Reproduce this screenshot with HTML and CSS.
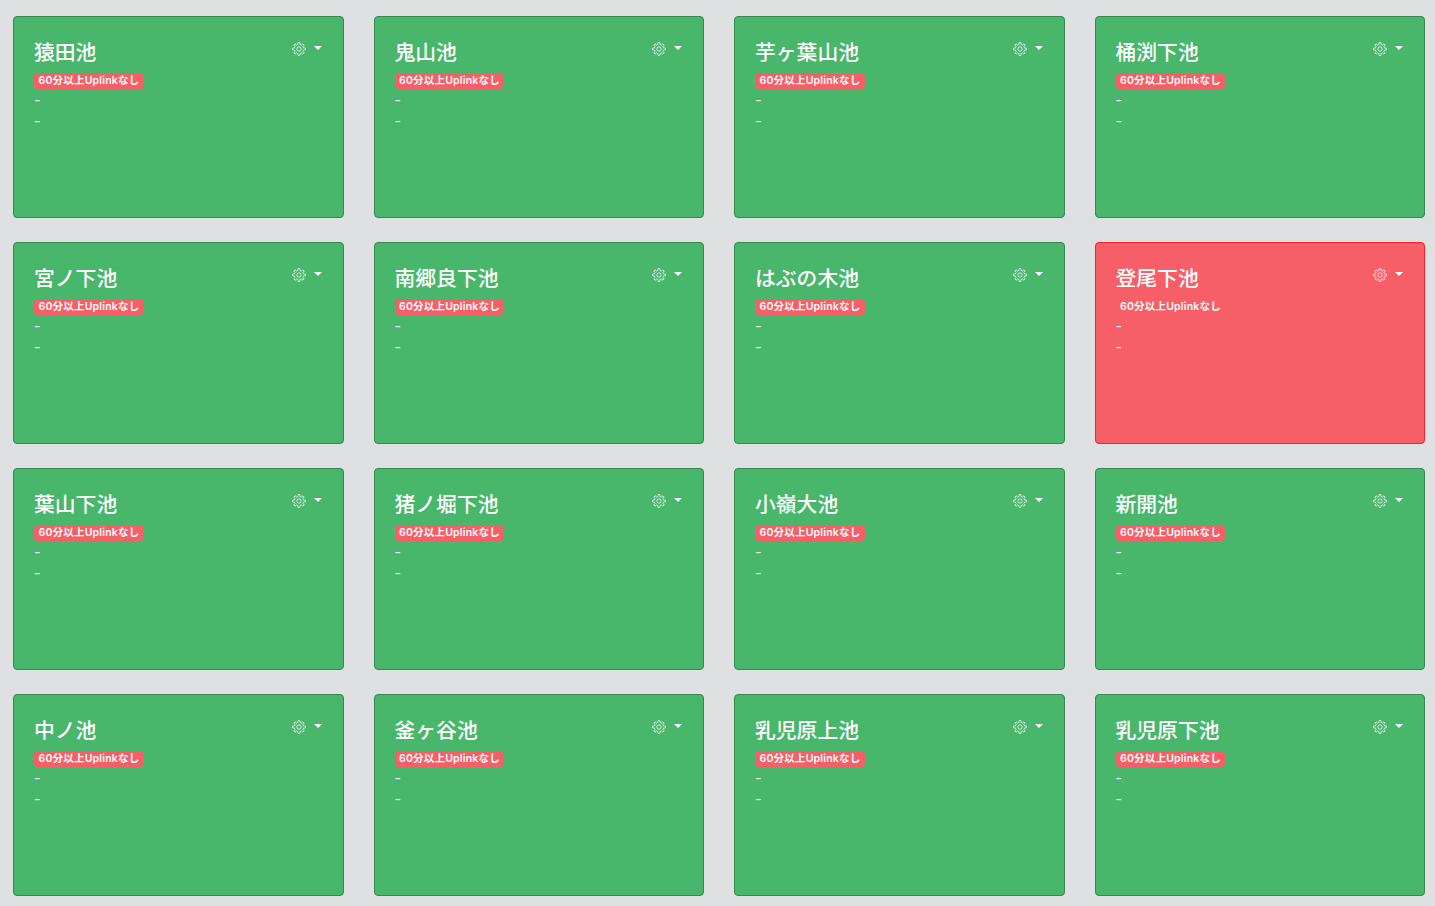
FILE: index.html
```html
<!DOCTYPE html>
<html lang="ja">

<head>
    <meta charset="UTF-8">
    <title>ため池一覧</title>
    <link rel="stylesheet" href="styles.css">
</head>

<body>

    <svg class="defs" width="0" height="0">
        <symbol id="gear" viewBox="0 0 16 16">
            <g fill="none" stroke="currentColor" stroke-width="0.85" stroke-linejoin="round">
                <path id="tooth" d="M5.97 3.1 6.81 2.84 6.97.67H9.03L9.19 2.84 10.03 3.1"/>
                <use href="#tooth" transform="rotate(45 8 8)"/>
                <use href="#tooth" transform="rotate(90 8 8)"/>
                <use href="#tooth" transform="rotate(135 8 8)"/>
                <use href="#tooth" transform="rotate(180 8 8)"/>
                <use href="#tooth" transform="rotate(225 8 8)"/>
                <use href="#tooth" transform="rotate(270 8 8)"/>
                <use href="#tooth" transform="rotate(315 8 8)"/>
                <circle cx="8" cy="8" r="2.5"/>
            </g>
        </symbol>
    </svg>

    <div class="grid">
        <div class="card">
            <div class="card-head"><h5>猿田池</h5><div class="menu"><svg class="gear"><use href="#gear"/></svg><span class="caret"></span></div></div>
            <span class="badge">60分以上Uplinkなし</span>
            <p>-</p>
            <p>-</p>
        </div>
        <div class="card">
            <div class="card-head"><h5>鬼山池</h5><div class="menu"><svg class="gear"><use href="#gear"/></svg><span class="caret"></span></div></div>
            <span class="badge">60分以上Uplinkなし</span>
            <p>-</p>
            <p>-</p>
        </div>
        <div class="card">
            <div class="card-head"><h5>芋ヶ葉山池</h5><div class="menu"><svg class="gear"><use href="#gear"/></svg><span class="caret"></span></div></div>
            <span class="badge">60分以上Uplinkなし</span>
            <p>-</p>
            <p>-</p>
        </div>
        <div class="card">
            <div class="card-head"><h5>桶渕下池</h5><div class="menu"><svg class="gear"><use href="#gear"/></svg><span class="caret"></span></div></div>
            <span class="badge">60分以上Uplinkなし</span>
            <p>-</p>
            <p>-</p>
        </div>

        <div class="card">
            <div class="card-head"><h5>宮ノ下池</h5><div class="menu"><svg class="gear"><use href="#gear"/></svg><span class="caret"></span></div></div>
            <span class="badge">60分以上Uplinkなし</span>
            <p>-</p>
            <p>-</p>
        </div>
        <div class="card">
            <div class="card-head"><h5>南郷良下池</h5><div class="menu"><svg class="gear"><use href="#gear"/></svg><span class="caret"></span></div></div>
            <span class="badge">60分以上Uplinkなし</span>
            <p>-</p>
            <p>-</p>
        </div>
        <div class="card">
            <div class="card-head"><h5>はぶの木池</h5><div class="menu"><svg class="gear"><use href="#gear"/></svg><span class="caret"></span></div></div>
            <span class="badge">60分以上Uplinkなし</span>
            <p>-</p>
            <p>-</p>
        </div>
        <div class="card card-alert">
            <div class="card-head"><h5>登尾下池</h5><div class="menu"><svg class="gear"><use href="#gear"/></svg><span class="caret"></span></div></div>
            <span class="badge">60分以上Uplinkなし</span>
            <p>-</p>
            <p>-</p>
        </div>

        <div class="card">
            <div class="card-head"><h5>葉山下池</h5><div class="menu"><svg class="gear"><use href="#gear"/></svg><span class="caret"></span></div></div>
            <span class="badge">60分以上Uplinkなし</span>
            <p>-</p>
            <p>-</p>
        </div>
        <div class="card">
            <div class="card-head"><h5>猪ノ堀下池</h5><div class="menu"><svg class="gear"><use href="#gear"/></svg><span class="caret"></span></div></div>
            <span class="badge">60分以上Uplinkなし</span>
            <p>-</p>
            <p>-</p>
        </div>
        <div class="card">
            <div class="card-head"><h5>小嶺大池</h5><div class="menu"><svg class="gear"><use href="#gear"/></svg><span class="caret"></span></div></div>
            <span class="badge">60分以上Uplinkなし</span>
            <p>-</p>
            <p>-</p>
        </div>
        <div class="card">
            <div class="card-head"><h5>新開池</h5><div class="menu"><svg class="gear"><use href="#gear"/></svg><span class="caret"></span></div></div>
            <span class="badge">60分以上Uplinkなし</span>
            <p>-</p>
            <p>-</p>
        </div>

        <div class="card">
            <div class="card-head"><h5>中ノ池</h5><div class="menu"><svg class="gear"><use href="#gear"/></svg><span class="caret"></span></div></div>
            <span class="badge">60分以上Uplinkなし</span>
            <p>-</p>
            <p>-</p>
        </div>
        <div class="card">
            <div class="card-head"><h5>釜ヶ谷池</h5><div class="menu"><svg class="gear"><use href="#gear"/></svg><span class="caret"></span></div></div>
            <span class="badge">60分以上Uplinkなし</span>
            <p>-</p>
            <p>-</p>
        </div>
        <div class="card">
            <div class="card-head"><h5>乳児原上池</h5><div class="menu"><svg class="gear"><use href="#gear"/></svg><span class="caret"></span></div></div>
            <span class="badge">60分以上Uplinkなし</span>
            <p>-</p>
            <p>-</p>
        </div>
        <div class="card">
            <div class="card-head"><h5>乳児原下池</h5><div class="menu"><svg class="gear"><use href="#gear"/></svg><span class="caret"></span></div></div>
            <span class="badge">60分以上Uplinkなし</span>
            <p>-</p>
            <p>-</p>
        </div>
    </div>

</body>

</html>
```

FILE: styles.css
```css
html,
body {
    height: 906px;
    overflow: hidden;
}

body {
    margin: 0;
    background: #dfe0e2;
    color: #fff;
    font-family: Inter, "Noto Sans CJK JP", sans-serif;
}

.defs {
    display: block;
}

.grid {
    display: grid;
    grid-template-columns: repeat(4, 1fr);
    gap: 24px 30px;
    padding: 16px 10px 0 13px;
}

.card {
    height: 202px;
    box-sizing: border-box;
    padding: 21px 20px 20px;
    background: #48b66b;
    border: 1px solid #38894f;
    border-radius: 4px;
}

.card-alert {
    background: #f65f67;
    border-color: #f5222d;
}

.card-head {
    display: flex;
    justify-content: space-between;
    align-items: flex-start;
}

h5 {
    margin: 0;
    font-size: 20.8px;
    font-weight: 500;
    line-height: 30px;
}

.menu {
    display: flex;
    align-items: flex-start;
    gap: 8px;
    padding: 4px 1px 0 0;
}

.gear {
    width: 14px;
    height: 14px;
}

.caret {
    margin-top: 4px;
    border-top: 4.5px solid #fff;
    border-left: 4.5px solid transparent;
    border-right: 4.5px solid transparent;
}

.badge {
    display: table;
    margin-top: 5px;
    margin-bottom: -1px;
    padding: 0 4.5px;
    background: #f65f67;
    border-radius: 4px;
    font-size: 10.5px;
    font-weight: 600;
    line-height: 16px;
    letter-spacing: 0.2px;
}

p {
    margin: 2px 0 0;
    font-size: 14px;
    line-height: 19px;
}
```
